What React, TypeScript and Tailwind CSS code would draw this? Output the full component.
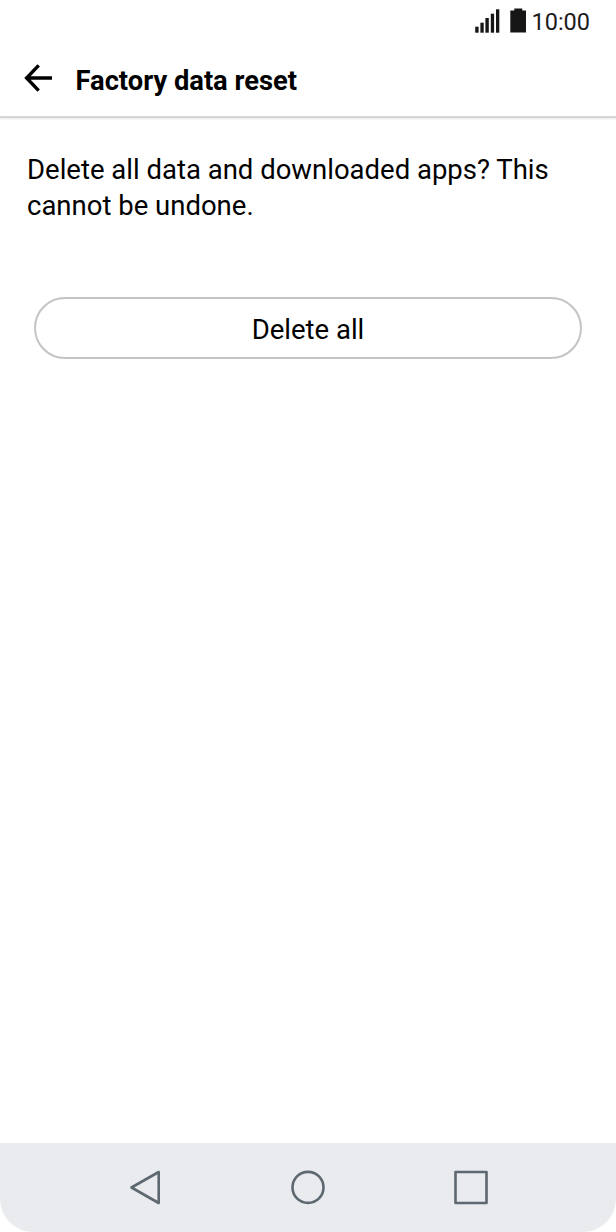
const SignalIcon = () => (
  <svg width="25" height="24" viewBox="0 0 25 24" fill="#161616">
    <rect x="0.2" y="17.7" width="3.4" height="6" />
    <rect x="5.4" y="13.7" width="3.3" height="10" />
    <rect x="10.4" y="9" width="3.4" height="14.7" />
    <rect x="15.8" y="4.7" width="3.3" height="19" />
    <rect x="21" y="0.3" width="3.3" height="23.4" />
  </svg>
);

const BatteryIcon = () => (
  <svg width="16" height="25" viewBox="0 0 16 25" fill="#161616">
    <path d="M4.3 0.4h8v2.2H16v22H0.3v-22h4z" />
  </svg>
);

const BackArrow = () => (
  <svg width="28" height="28" viewBox="0 0 28 28" fill="none" stroke="#000" strokeWidth="3.4">
    <path d="M28 14H3M14.7 1.3L2.6 14l12.1 12.7" />
  </svg>
);

const StatusBar = () => (
  <div className="flex h-11 items-start justify-end pt-2 pr-[26px] text-[#1c1c1c]">
    <div className="pt-px">
      <SignalIcon />
    </div>
    <div className="ml-2.5">
      <BatteryIcon />
    </div>
    <span className="ml-[5px] text-[23.5px] leading-7">10:00</span>
  </div>
);

const Header = () => (
  <div className="flex h-[74px] border-b-2 border-[#d6d6d6] pl-6 shadow-[0_1px_2px_rgba(0,0,0,0.1)]">
    <button className="h-7 pt-5">
      <BackArrow />
    </button>
    <h1 className="ml-[23.5px] pt-[17px] text-[27.3px] leading-10 font-bold">Factory data reset</h1>
  </div>
);

const NavBar = () => (
  <div className="flex h-[89px] items-start justify-between rounded-b-[33px] bg-[#e9ebee] px-32 pt-[27px]">
    <svg width="34" height="35" viewBox="0 0 34 35" fill="none" stroke="#5d6870" strokeWidth="2.6" strokeLinejoin="round">
      <path d="M30.7 2v31L3.5 17.5z" />
    </svg>
    <svg width="34" height="35" viewBox="0 0 34 35" fill="none" stroke="#5d6870" strokeWidth="2.6">
      <circle cx="17" cy="17.4" r="15.5" />
    </svg>
    <svg width="34" height="35" viewBox="0 0 34 35" fill="none" stroke="#5d6870" strokeWidth="2.6" strokeLinejoin="round">
      <rect x="1.5" y="2" width="31" height="31" />
    </svg>
  </div>
);

const App = () => (
  <div className="flex h-screen flex-col bg-white font-[Roboto,sans-serif] text-black">
    <StatusBar />
    <Header />
    <main className="flex-1 pt-[34px]">
      <p className="pr-7 pl-[27px] text-[27.5px] leading-9">
        Delete all data and downloaded apps? This cannot be undone.
      </p>
      <div className="px-[34px] pt-[73px]">
        <button className="h-[62px] w-full rounded-full border-2 border-[#c4c4c4] pt-1 text-[27.5px]">
          Delete all
        </button>
      </div>
    </main>
    <NavBar />
  </div>
);

export default App;
